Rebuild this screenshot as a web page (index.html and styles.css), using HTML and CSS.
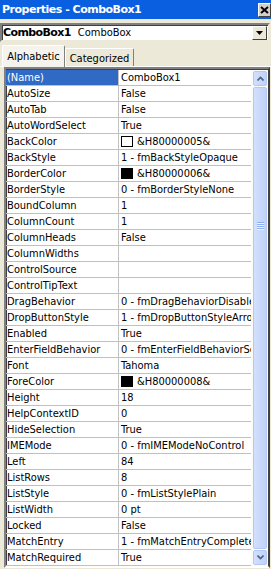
FILE: index.html
```html
<!DOCTYPE html>
<html lang="en">
  <head>
    <meta charset="UTF-8" />
    <title>Properties - ComboBox1</title>
    <link rel="stylesheet" href="styles.css">
  </head>
  <body>
    <div class="window">
      <div class="titlebar">
        <span class="title">Properties - ComboBox1</span>
        <span class="close">
          <svg width="9" height="8" viewBox="0 0 9 8"><path d="M1 1 L8 7 M8 1 L1 7" stroke="#000" stroke-width="2" fill="none"/></svg>
        </span>
      </div>

      <div class="objbox">
        <span class="objname">ComboBox1</span>
        <span class="objtype">ComboBox</span>
        <span class="drop">
          <svg width="7" height="4" viewBox="0 0 7 4"><path d="M0 0 H7 L3.5 4 Z" fill="#000"/></svg>
        </span>
      </div>

      <div class="tabs">
        <div class="tab active">Alphabetic</div>
        <div class="tab">Categorized</div>
      </div>

      <div class="grid">
        <div class="props">
          <div class="row sel"><div class="name">(Name)</div><div class="value">ComboBox1</div></div>
          <div class="row"><div class="name">AutoSize</div><div class="value">False</div></div>
          <div class="row"><div class="name">AutoTab</div><div class="value">False</div></div>
          <div class="row"><div class="name">AutoWordSelect</div><div class="value">True</div></div>
          <div class="row"><div class="name">BackColor</div><div class="value"><span class="swatch white"></span>&amp;H80000005&amp;</div></div>
          <div class="row"><div class="name">BackStyle</div><div class="value">1 - fmBackStyleOpaque</div></div>
          <div class="row"><div class="name">BorderColor</div><div class="value"><span class="swatch black"></span>&amp;H80000006&amp;</div></div>
          <div class="row"><div class="name">BorderStyle</div><div class="value">0 - fmBorderStyleNone</div></div>
          <div class="row"><div class="name">BoundColumn</div><div class="value">1</div></div>
          <div class="row"><div class="name">ColumnCount</div><div class="value">1</div></div>
          <div class="row"><div class="name">ColumnHeads</div><div class="value">False</div></div>
          <div class="row"><div class="name">ColumnWidths</div><div class="value"></div></div>
          <div class="row"><div class="name">ControlSource</div><div class="value"></div></div>
          <div class="row"><div class="name">ControlTipText</div><div class="value"></div></div>
          <div class="row"><div class="name">DragBehavior</div><div class="value">0 - fmDragBehaviorDisabled</div></div>
          <div class="row"><div class="name">DropButtonStyle</div><div class="value">1 - fmDropButtonStyleArrow</div></div>
          <div class="row"><div class="name">Enabled</div><div class="value">True</div></div>
          <div class="row"><div class="name">EnterFieldBehavior</div><div class="value">0 - fmEnterFieldBehaviorSelectAll</div></div>
          <div class="row"><div class="name">Font</div><div class="value">Tahoma</div></div>
          <div class="row"><div class="name">ForeColor</div><div class="value"><span class="swatch black"></span>&amp;H80000008&amp;</div></div>
          <div class="row"><div class="name">Height</div><div class="value">18</div></div>
          <div class="row"><div class="name">HelpContextID</div><div class="value">0</div></div>
          <div class="row"><div class="name">HideSelection</div><div class="value">True</div></div>
          <div class="row"><div class="name">IMEMode</div><div class="value">0 - fmIMEModeNoControl</div></div>
          <div class="row"><div class="name">Left</div><div class="value">84</div></div>
          <div class="row"><div class="name">ListRows</div><div class="value">8</div></div>
          <div class="row"><div class="name">ListStyle</div><div class="value">0 - fmListStylePlain</div></div>
          <div class="row"><div class="name">ListWidth</div><div class="value">0 pt</div></div>
          <div class="row"><div class="name">Locked</div><div class="value">False</div></div>
          <div class="row"><div class="name">MatchEntry</div><div class="value">1 - fmMatchEntryComplete</div></div>
          <div class="row"><div class="name">MatchRequired</div><div class="value">True</div></div>
        </div>

        <div class="scrollbar">
          <div class="sbtn">
            <svg width="7" height="5" viewBox="0 0 7 5"><path d="M0.5 4.5 L3.5 1.5 L6.5 4.5" stroke="#4d6185" stroke-width="1.6" fill="none"/></svg>
          </div>
          <div class="thumb"><span class="grip"></span></div>
          <div class="sbtn">
            <svg width="7" height="5" viewBox="0 0 7 5"><path d="M0.5 0.5 L3.5 3.5 L6.5 0.5" stroke="#4d6185" stroke-width="1.6" fill="none"/></svg>
          </div>
        </div>
      </div>
    </div>
  </body>
</html>
```

FILE: styles.css
```css
* {
  margin: 0;
  padding: 0;
  box-sizing: border-box;
}

body {
  background: #ece9d8;
  font-family: "DejaVu Sans Condensed", "DejaVu Sans", sans-serif;
  font-stretch: condensed;
  font-size: 11px;
  color: #000;
}

.window {
  width: 271px;
  height: 569px;
  display: flex;
  flex-direction: column;
  overflow: hidden;
}

/* Title bar */
.titlebar {
  height: 19px;
  background: #0a5fe0;
  display: flex;
  align-items: center;
  justify-content: space-between;
  padding-left: 2px;
}

.title {
  color: #fff;
  font-family: "DejaVu Sans", sans-serif;
  font-stretch: normal;
  font-weight: bold;
  font-size: 11px;
  letter-spacing: -0.5px;
}

.close {
  width: 13px;
  height: 14px;
  margin-top: 1px;
  background: #d4d0c8;
  border: 1px solid;
  border-color: #fff #404040 #404040 #fff;
  display: flex;
  align-items: center;
  justify-content: center;
}

/* Object selector */
.objbox {
  margin: 4px 1px 0 0;
  height: 19px;
  background: #fff;
  border: 2px solid;
  border-color: #808080 #ece9d8 #ece9d8 #808080;
  box-shadow: inset 1px 1px 0 #404040;
  display: flex;
  align-items: center;
  padding-left: 1px;
}

.objname {
  font-family: "DejaVu Sans", sans-serif;
  font-weight: bold;
  font-stretch: normal;
  letter-spacing: -0.6px;
}

.objtype {
  margin-left: 7px;
  flex: 1;
}

.drop {
  width: 15px;
  height: 14px;
  margin-right: 1px;
  background: #ece9d8;
  border: 1px solid;
  border-color: #fff #404040 #404040 #fff;
  display: flex;
  align-items: center;
  justify-content: center;
}

/* Tabs */
.tabs {
  height: 25px;
  display: flex;
  align-items: flex-end;
  padding-left: 2px;
  border-bottom: 1px solid #fff;
}

.tab {
  height: 18px;
  width: 69px;
  border: 1px solid;
  border-bottom: none;
  border-color: #fff #808080 #808080 #fff;
  border-radius: 2px 2px 0 0;
  display: flex;
  align-items: center;
  justify-content: center;
  padding-top: 2px;
}

.tab.active {
  width: 63px;
  height: 22px;
  margin-bottom: -1px;
  background: #f4f3ee;
  padding-top: 0;
}

/* Property grid */
.grid {
  flex: 1;
  margin: 0 1px 1px 4px;
  border: 2px solid;
  border-color: #808080 #404040 #fff #808080;
  box-shadow: inset 1px 1px 0 #404040;
  padding-top: 1px;
  background: #fff;
  display: flex;
}

.props {
  width: 245px;
}

.row {
  height: 16px;
  display: grid;
  grid-template-columns: 113px 1fr;
  border-bottom: 1px solid #c0c0c0;
  white-space: nowrap;
}

.name {
  border-right: 1px solid #c0c0c0;
  padding-left: 1px;
  line-height: 15px;
  overflow: hidden;
}

.row.sel .name {
  background: #316ac5;
  color: #fff;
}

.value {
  padding-left: 2px;
  line-height: 15px;
  overflow: hidden;
  display: flex;
  align-items: center;
}

.swatch {
  width: 12px;
  height: 11px;
  border: 1px solid #000;
  margin-right: 4px;
  flex-shrink: 0;
}

.swatch.black {
  background: #000;
}

.swatch.white {
  background: #fff;
}

/* Scrollbar */
.scrollbar {
  flex: 1;
  background: #fbfbf8;
  display: flex;
  flex-direction: column;
  padding: 1px 1px 1px 2px;
  gap: 1px;
}

.sbtn,
.thumb {
  border: 1px solid #b4c8f6;
  border-radius: 2px;
  background: linear-gradient(to right, #d3e0fd, #c0d2f8);
  display: flex;
  align-items: center;
  justify-content: center;
}

.sbtn {
  height: 15px;
}

.thumb {
  flex: 1;
  align-items: flex-start;
  padding-top: 134px;
}

.grip {
  width: 7px;
  height: 8px;
  background: repeating-linear-gradient(
    to bottom,
    #8cb0f8 0px,
    #8cb0f8 1px,
    #eef3fe 1px,
    #eef3fe 2px
  );
}
```
